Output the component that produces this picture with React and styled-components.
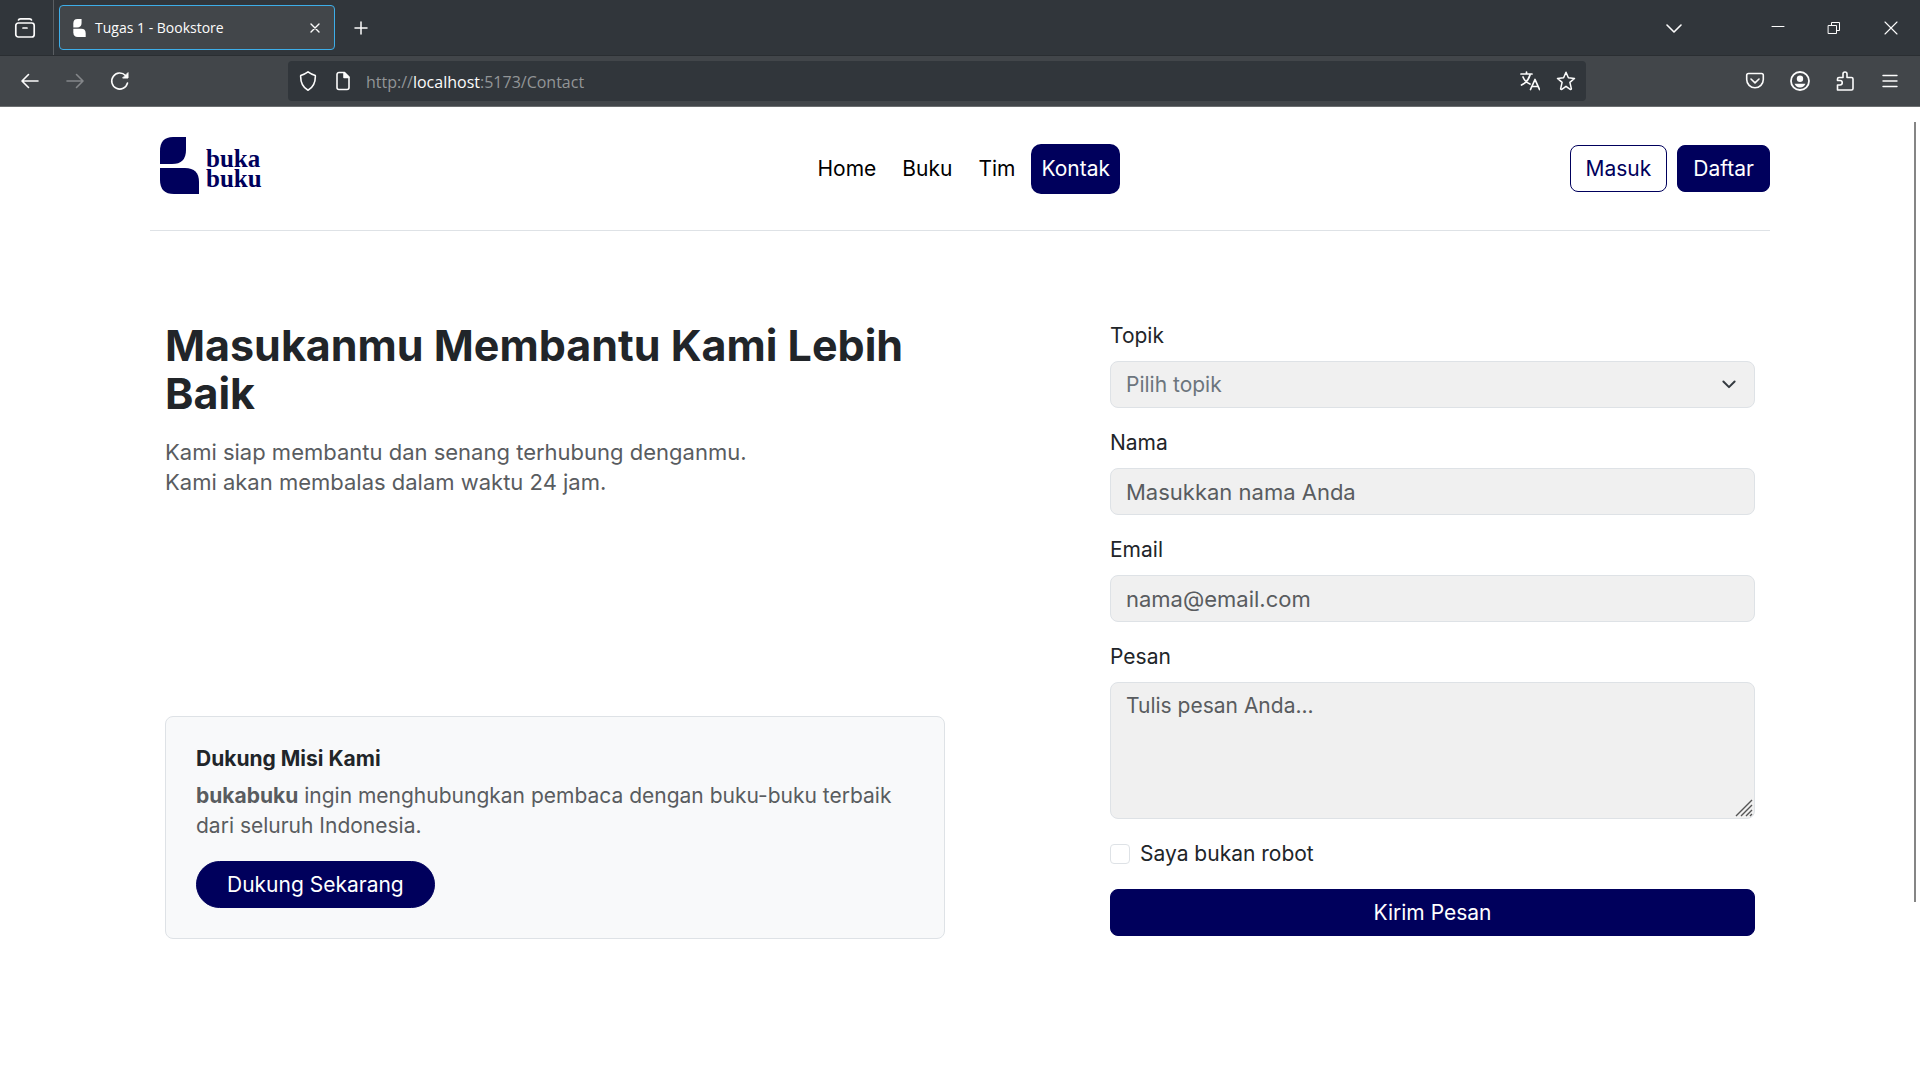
import React from 'react';
import styled, { createGlobalStyle, css } from 'styled-components';

const navy = '#00005c';
const sans = 'Inter, "Open Sans", sans-serif';
const chromeSans = '"Open Sans", "Noto Sans", sans-serif';

const GlobalStyle = createGlobalStyle`
  *, *::before, *::after { box-sizing: border-box; }
  html, body { margin: 0; background: #fff; overflow: hidden; }
  body { font-family: ${sans}; font-size: 21px; line-height: 30px; color: #212529; }
  button, input, select, textarea { font: inherit; }
  h1, h2, p { margin: 0; }
`;

/* ---------- Browser window ---------- */

const Window = styled.div`
  display: flex;
  flex-direction: column;
  height: 100vh;
`;

const TabStrip = styled.div`
  display: flex;
  align-items: center;
  height: 56px;
  background: #31363b;
  border-bottom: 1px solid #2a2e32;
  flex: none;
`;

const Toolbar = styled.div`
  display: flex;
  align-items: center;
  height: 51px;
  background: #42464a;
  border-bottom: 1px solid #6b6e70;
  flex: none;
`;

const IconButton = styled.button`
  display: flex;
  align-items: center;
  justify-content: center;
  flex: none;
  width: ${({ $w }) => $w || 45}px;
  height: 100%;
  padding: 0;
  border: 0;
  background: none;
  color: ${({ $dim }) => ($dim ? '#84878a' : '#fcfcfc')};
`;

const ViewSlot = styled.div`
  width: 54px;
  height: 100%;
  padding-left: 8px;
  border-right: 1px solid #5a5e62;
  margin-right: 5px;
`;

const Tab = styled.div`
  display: flex;
  align-items: center;
  gap: 9px;
  width: 276px;
  height: 45px;
  padding-left: 13px;
  border: 1px solid #3daee9;
  border-radius: 4px;
  background: #42464a;
  color: #fcfcfc;
  font-family: ${chromeSans};
  font-size: 14px;
  line-height: 20px;
`;

const TabTitle = styled.span`
  flex: 1;
  white-space: nowrap;
`;

const Spacer = styled.div`
  flex: 1;
`;

const Group = styled.div`
  display: flex;
  height: 100%;
  padding: ${({ $pad }) => $pad || '0'};
`;

const AddressBar = styled.div`
  display: flex;
  align-items: center;
  width: 1298px;
  min-width: 0;
  height: 40px;
  padding: 0 2px;
  border-radius: 4px;
  background: #31363b;
`;

const Address = styled.div`
  flex: 1;
  padding: 2px 0 0 6px;
  font-family: ${chromeSans};
  font-size: 16px;
  line-height: 24px;
  color: #929597;
  white-space: nowrap;

  b { font-weight: 400; color: #fcfcfc; }
`;

const Viewport = styled.div`
  position: relative;
  flex: 1;
  min-height: 0;
  background: #fff;
`;

const ScrollThumb = styled.div`
  position: absolute;
  top: 15px;
  right: 4px;
  width: 2px;
  height: 780px;
  background: #858585;
`;

/* ---------- Page ---------- */

const Container = styled.div`
  max-width: 1620px;
  margin: 0 auto;
`;

const Header = styled.header`
  display: flex;
  justify-content: space-between;
  align-items: center;
  height: 124px;
  border-bottom: 1px solid #dee2e6;
`;

const Brand = styled.a`
  display: flex;
  align-items: center;
  gap: 7px;
  width: 208px;
  padding: 0 0 6px 10px;
  color: ${navy};
  text-decoration: none;
`;

const BrandName = styled.span`
  padding-top: 6px;
  font-family: "Liberation Serif", serif;
  font-size: 25px;
  font-weight: 700;
  line-height: 20px;
`;

const Nav = styled.nav`
  display: flex;
  gap: 6px;
`;

const NavLink = styled.a`
  padding: 10px;
  border-radius: 10px;
  color: #000;
  text-decoration: none;
  ${({ $active }) => $active && css`
    background: ${navy};
    color: #fff;
  `}
`;

const Button = styled.button`
  height: 47px;
  padding: 0 15px;
  border: 1px solid ${navy};
  border-radius: 8px;
  background: ${navy};
  color: #fff;
  line-height: 30px;
  ${({ $outline }) => $outline && css`
    background: #fff;
    color: ${navy};
  `}
  ${({ $pill }) => $pill && css`
    padding: 0 30px;
    border-radius: 24px;
  `}
  ${({ $block }) => $block && css`
    width: 100%;
  `}
`;

const Actions = styled.div`
  display: flex;
  justify-content: flex-end;
  gap: 10px;
`;

const Main = styled.main`
  display: grid;
  grid-template-columns: 52fr 43fr;
  column-gap: 165px;
  padding: 90px 15px;
`;

const Intro = styled.section`
  display: flex;
  flex-direction: column;
  justify-content: space-between;
`;

const Title = styled.h1`
  margin-bottom: 20px;
  font-size: 43px;
  font-weight: 700;
  line-height: 48px;
`;

const Lead = styled.p`
  color: #595c5f;
  font-size: 22px;
`;

const Card = styled.article`
  padding: 30px;
  border: 1px solid #dee2e6;
  border-radius: 8px;
  background: #f8f9fa;
`;

const CardTitle = styled.h2`
  margin-bottom: 10px;
  font-size: 21px;
  font-weight: 700;
  line-height: 24px;
`;

const CardText = styled.p`
  margin-bottom: 20px;
  color: #595c5f;
`;

const Form = styled.form`
  display: flex;
  flex-direction: column;
  gap: 20px;
  padding-bottom: 3px;
`;

const Field = styled.div`
  position: relative;
  display: flex;
  flex-direction: column;
  gap: 10px;
`;

const control = css`
  width: 100%;
  height: 47px;
  padding: 7px 15px;
  border: 1px solid #dee2e6;
  border-radius: 8px;
  background: #f0f0f0;
  color: #212529;
  line-height: 30px;
  &::placeholder { color: #595c5f; opacity: 1; }
`;

const Input = styled.input`
  ${control}
  font-size: 22px;
`;

const Select = styled.select`
  ${control}
  appearance: none;
  color: #6c757d;
`;

const TextArea = styled.textarea`
  ${control}
  height: 137px;
  padding-top: 8px;
  resize: none;
`;

const SelectArrow = styled.svg`
  position: absolute;
  right: 16px;
  bottom: 14px;
  pointer-events: none;
`;

const ResizeGrip = styled.svg`
  position: absolute;
  right: 2px;
  bottom: 2px;
  pointer-events: none;
`;

const CheckRow = styled.div`
  display: flex;
  align-items: center;
  gap: 10px;
`;

const Checkbox = styled.input`
  appearance: none;
  width: 20px;
  height: 20px;
  margin: 0;
  border: 1px solid #dee2e6;
  border-radius: 4px;
  background: #fff;
`;

/* ---------- Icons ---------- */

const Icon = ({ size = 20, sw = 1.6, children }) => (
  <svg width={size} height={size} viewBox={`0 0 ${size} ${size}`} fill="none" stroke="currentColor"
    strokeWidth={sw} strokeLinecap="round" strokeLinejoin="round" aria-hidden="true">
    {children}
  </svg>
);

const LogoMark = ({ width, height, color }) => (
  <svg width={width} height={height} viewBox="0 0 39 57" aria-hidden="true">
    <path fill={color} d="M13 0H26V13Q26 27 12 27H0V14Q0 0 13 0Z" />
    <path fill={color} d="M0 31H25Q39 31 39 45V57H14Q0 57 0 43Z" />
  </svg>
);

function BrowserChrome() {
  return (
    <>
      <TabStrip>
        <ViewSlot>
          <IconButton $w={34} aria-label="Firefox View">
            <Icon size={22} sw={1.7}>
              <path d="M4.500 3Q4.800 1.800 6.500 1.800H15.500Q17.200 1.800 17.500 3" />
              <rect x="1.800" y="6" width="18.400" height="14" rx="2.500" />
              <path d="M9 11h4" />
            </Icon>
          </IconButton>
        </ViewSlot>
        <Tab>
          <LogoMark width={13} height={18} color="#fff" />
          <TabTitle>Tugas 1 - Bookstore</TabTitle>
          <IconButton $w={38} aria-label="Tutup tab">
            <Icon size={10} sw={1.4}><path d="M1 1l8 8M9 1l-8 8" /></Icon>
          </IconButton>
        </Tab>
        <IconButton $w={52} aria-label="Tab baru">
          <Icon size={14} sw={1.5}><path d="M7 1v12M1 7h12" /></Icon>
        </IconButton>
        <Spacer />
        <IconButton $w={50} aria-label="Daftar tab">
          <Icon size={16}><path d="M1 5l7 7 7-7" /></Icon>
        </IconButton>
        <Group $pad="0 0 0 51px">
          <IconButton $w={56} aria-label="Kecilkan">
            <Icon size={14} sw={1}><path d="M1 5.500h12" /></Icon>
          </IconButton>
          <IconButton $w={56} aria-label="Pulihkan">
            <Icon size={14} sw={1}><path d="M1.500 4.500h8v8h-8zM4.500 4.500v-3h8v8h-3" /></Icon>
          </IconButton>
          <IconButton $w={58} aria-label="Tutup">
            <Icon size={14} sw={1.100}><path d="M1 1l12 12M13 1L1 13" /></Icon>
          </IconButton>
        </Group>
      </TabStrip>
      <Toolbar>
        <Group $pad="0 0 0 7px">
          <IconButton aria-label="Kembali">
            <Icon size={20}><path d="M18 10H2.500M8.500 3.500L2 10l6.500 6.500" /></Icon>
          </IconButton>
          <IconButton $dim aria-label="Maju">
            <Icon size={20}><path d="M2 10h15.500M11.500 3.500L18 10l-6.500 6.500" /></Icon>
          </IconButton>
          <IconButton aria-label="Muat ulang">
            <Icon size={20}>
              <path d="M17.500 12A8 8 0 1 1 15.500 4.500" />
              <path d="M18 2v5h-5z" fill="currentColor" strokeWidth="1" />
            </Icon>
          </IconButton>
        </Group>
        <Spacer />
        <AddressBar>
          <IconButton $w={36} aria-label="Perlindungan">
            <Icon size={20}><path d="M10 .8Q13.500 3.300 17.300 4.500C17.600 11 15.500 16.200 10 19.200 4.500 16.200 2.400 11 2.700 4.500Q6.500 3.300 10 .8Z" /></Icon>
          </IconButton>
          <IconButton $w={34} aria-label="Informasi situs">
            <Icon size={20}>
              <path d="M6 1.500h5.500L16 6v10.500a2 2 0 0 1-2 2H6a2 2 0 0 1-2-2v-13a2 2 0 0 1 2-2z" />
              <path d="M11 2v4.500h4.500z" fill="currentColor" />
            </Icon>
          </IconButton>
          <Address>http://<b>localhost</b>:5173/Contact</Address>
          <IconButton $w={36} aria-label="Terjemahkan">
            <Icon size={20} sw={1.700}>
              <path d="M1 3h11M6.500 1v2M3 6q2 5 7 7M10 4Q8 11 1.500 14" />
              <path d="M10.500 18.500L15 8.500l4.500 10M12 15.500h6" />
            </Icon>
          </IconButton>
          <IconButton $w={36} aria-label="Markah">
            <Icon size={20} sw={1.500}>
              <path d="M10 1.300l2.400 5.500 6.100.6-4.600 4 1.500 6.400q-.3 1-1.200.6L10 15.300l-4.200 3.100q-.9.400-1.200-.6l1.500-6.400-4.600-4 6.100-.6z" />
            </Icon>
          </IconButton>
        </AddressBar>
        <Spacer />
        <Group $pad="0 8px 0 0">
          <IconButton aria-label="Pocket">
            <Icon size={20}>
              <path d="M3.500 2.500h13a1.800 1.800 0 0 1 1.800 1.800v4.200a8.300 8.300 0 0 1-16.600 0V4.300a1.800 1.800 0 0 1 1.800-1.800z" />
              <path d="M6 8l4 3.800L14 8" />
            </Icon>
          </IconButton>
          <IconButton aria-label="Akun">
            <Icon size={20} sw={1.800}>
              <circle cx="10" cy="10" r="9" />
              <circle cx="10" cy="7.800" r="3.200" fill="currentColor" stroke="none" />
              <path d="M4.500 12.800h11Q14 16.500 10 16.500t-5.500-3.700z" fill="currentColor" stroke="none" />
            </Icon>
          </IconButton>
          <IconButton aria-label="Ekstensi">
            <Icon size={20}>
              <path d="M2.500 19v-5H5a1.900 1.900 0 0 0 0-4.500H2.500V8A1.500 1.500 0 0 1 4 6.500h4V3a2 2 0 0 1 4 0v3.500h4.500A1.500 1.500 0 0 1 18 8v9.500a1.500 1.500 0 0 1-1.500 1.500z" />
            </Icon>
          </IconButton>
          <IconButton aria-label="Menu">
            <Icon size={16} sw={1.400}><path d="M1 2.500h14M1 8h14M1 13.500h14" /></Icon>
          </IconButton>
        </Group>
      </Toolbar>
    </>
  );
}

const navItems = ['Home', 'Buku', 'Tim', 'Kontak'];

export default function App() {
  return (
    <Window>
      <GlobalStyle />
      <BrowserChrome />
      <Viewport>
        <Container>
          <Header>
            <Brand href="#" aria-label="bukabuku">
              <LogoMark width={39} height={57} color={navy} />
              <BrandName>buka<br />buku</BrandName>
            </Brand>
            <Nav>
              {navItems.map((item) => (
                <NavLink key={item} href="#" $active={item === 'Kontak'}>{item}</NavLink>
              ))}
            </Nav>
            <Actions>
              <Button type="button" $outline>Masuk</Button>
              <Button type="button">Daftar</Button>
            </Actions>
          </Header>
          <Main>
            <Intro>
              <div>
                <Title>Masukanmu Membantu Kami Lebih Baik</Title>
                <Lead>Kami siap membantu dan senang terhubung denganmu.<br />Kami akan membalas dalam waktu 24 jam.</Lead>
              </div>
              <Card>
                <CardTitle>Dukung Misi Kami</CardTitle>
                <CardText><strong>bukabuku</strong> ingin menghubungkan pembaca dengan buku-buku terbaik dari seluruh Indonesia.</CardText>
                <Button type="button" $pill>Dukung Sekarang</Button>
              </Card>
            </Intro>
            <Form onSubmit={(e) => e.preventDefault()}>
              <Field>
                <label htmlFor="topik">Topik</label>
                <Select id="topik" defaultValue="">
                  <option value="">Pilih topik</option>
                </Select>
                <SelectArrow width="20" height="20" viewBox="0 0 16 16" fill="none" stroke="#343a40"
                  strokeWidth="1.6" strokeLinecap="round" strokeLinejoin="round" aria-hidden="true">
                  <path d="M3.500 6l4.500 4.500L12.500 6" />
                </SelectArrow>
              </Field>
              <Field>
                <label htmlFor="nama">Nama</label>
                <Input id="nama" type="text" placeholder="Masukkan nama Anda" />
              </Field>
              <Field>
                <label htmlFor="email">Email</label>
                <Input id="email" type="email" placeholder="nama@email.com" />
              </Field>
              <Field>
                <label htmlFor="pesan">Pesan</label>
                <TextArea id="pesan" placeholder="Tulis pesan Anda..." />
                <ResizeGrip width="18" height="18" viewBox="0 0 18 18" stroke="#555" strokeWidth="1.4" aria-hidden="true">
                  <path d="M1 17L17 1M6 17L17 6M11 17l6-6M15 17l2-2" />
                </ResizeGrip>
              </Field>
              <CheckRow>
                <Checkbox id="robot" type="checkbox" />
                <label htmlFor="robot">Saya bukan robot</label>
              </CheckRow>
              <Button type="submit" $block>Kirim Pesan</Button>
            </Form>
          </Main>
        </Container>
        <ScrollThumb />
      </Viewport>
    </Window>
  );
}
